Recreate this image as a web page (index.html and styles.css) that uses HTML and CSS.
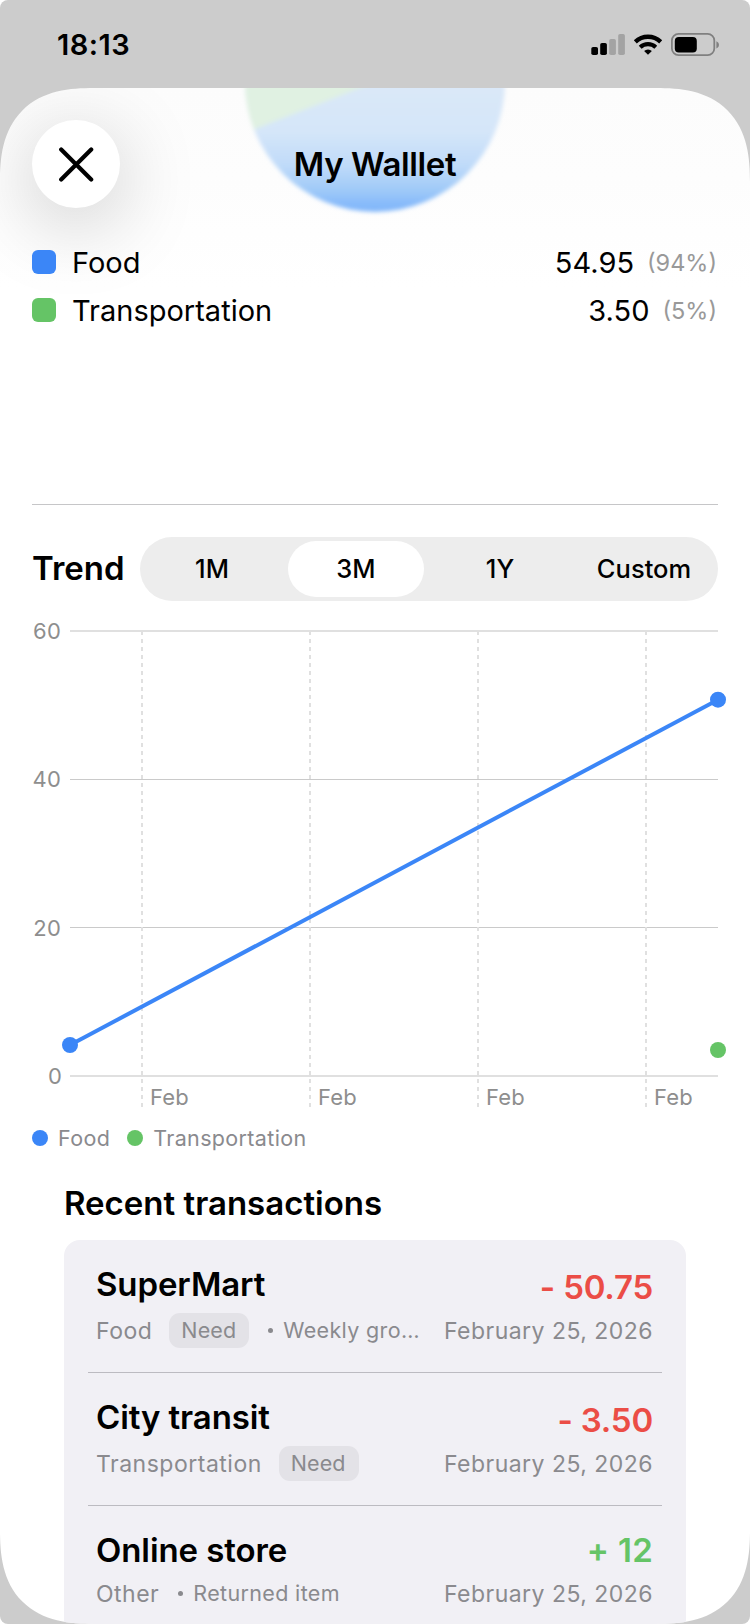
FILE: index.html
```
<!DOCTYPE html>
<html lang="en">
<head>
  <meta charset="UTF-8" />
  <meta name="viewport" content="width=device-width, initial-scale=1.0">
  <title>My Walllet</title>
  <link rel="stylesheet" href="styles.css">
</head>
<body>
  <div class="screen">
    <div class="status-bar">
      <span class="clock">18:13</span>
      <svg class="status-icons" width="130" height="26" viewBox="590 32 130 26">
        <rect x="591.3" y="47" width="6.7" height="8" rx="1.8"/>
        <rect x="600.2" y="43" width="6.7" height="12" rx="1.8"/>
        <rect x="609.2" y="39" width="6.7" height="16" rx="1.8" fill="#a3a3a3"/>
        <rect x="618.2" y="34" width="6.7" height="21" rx="1.8" fill="#a3a3a3"/>
        <!-- wifi -->
        <path d="M635.3 41.8a18.6 18.6 0 0 1 25.4 0" fill="none" stroke="#000" stroke-width="4.4"/>
        <path d="M640.2 47.2a11.6 11.6 0 0 1 15.6 0" fill="none" stroke="#000" stroke-width="4.2"/>
        <path d="M648 54.8l-3.9-3.7a5.8 5.8 0 0 1 7.8 0z"/>
        <!-- battery -->
        <rect x="671.9" y="33.9" width="42.4" height="21.2" rx="6.6" fill="none" stroke="#808080" stroke-width="1.8"/>
        <rect x="674.8" y="37" width="22" height="15.4" rx="4"/>
        <path d="M716.4 41.2c3.4 1.4 3.4 5.8 0 7.2z" fill="#808080"/>
      </svg>
    </div>

    <div class="sheet">
      <div class="sheet-header">
        <svg class="pie" width="290" height="150" viewBox="230 88 290 150">
          <defs>
            <linearGradient id="pieFade" gradientUnits="userSpaceOnUse" x1="0" y1="88" x2="0" y2="212">
              <stop offset="0" stop-color="#dae8f8"/>
              <stop offset="0.35" stop-color="#d5e6f9"/>
              <stop offset="0.62" stop-color="#c0dbf9"/>
              <stop offset="0.82" stop-color="#a0caf8"/>
              <stop offset="0.94" stop-color="#86bafa"/>
              <stop offset="1" stop-color="#84b8fa"/>
            </linearGradient>
            <filter id="pieBlur" x="-10%" y="-10%" width="120%" height="120%">
              <feGaussianBlur stdDeviation="2"/>
            </filter>
          </defs>
          <g filter="url(#pieBlur)">
            <circle cx="375" cy="82" r="130" fill="url(#pieFade)"/>
            <path d="M375 82L254 129.6A130 130 0 0 1 245 82z" fill="#e0f1e2"/>
          </g>
        </svg>
        <button class="close-button" aria-label="Close">
          <svg width="36" height="36" viewBox="0 0 36 36">
            <path d="M3.2 3.4L33.2 33.4M33.2 3.4L3.2 33.4" fill="none" stroke="#000" stroke-width="4.2" stroke-linecap="round"/>
          </svg>
        </button>
        <h1 class="sheet-title">My Walllet</h1>
      </div>

      <div class="categories">
        <div class="category">
          <span class="swatch food"></span>
          <span class="category-name">Food</span>
          <span class="category-value">54.95</span>
          <span class="category-percent">(94%)</span>
        </div>
        <div class="category">
          <span class="swatch transport"></span>
          <span class="category-name">Transportation</span>
          <span class="category-value">3.50</span>
          <span class="category-percent">(5%)</span>
        </div>
      </div>

      <div class="trend-row">
        <h2 class="trend-title">Trend</h2>
        <div class="segments">
          <button class="segment">1M</button>
          <button class="segment active">3M</button>
          <button class="segment">1Y</button>
          <button class="segment">Custom</button>
        </div>
      </div>

      <svg class="chart" width="750" height="522" viewBox="0 601 750 522">
        <path d="M70 631H718M70 1076H718" stroke="#e0e0e0" stroke-width="2"/>
        <path d="M70 779.5H718M70 927.5H718" stroke="#cacaca"/>
        <path d="M142 631V1107M310 631V1107M478 631V1107M646 631V1107" stroke="#e0e0e0" stroke-width="2" stroke-dasharray="4 4"/>
        <g class="axis-label" text-anchor="end">
          <text x="61" y="639">60</text>
          <text x="61" y="787">40</text>
          <text x="61" y="936">20</text>
          <text x="62" y="1084">0</text>
        </g>
        <g class="axis-label">
          <text x="150" y="1105">Feb</text>
          <text x="318" y="1105">Feb</text>
          <text x="486" y="1105">Feb</text>
          <text x="654" y="1105">Feb</text>
        </g>
        <path d="M70 1045L718 699.7" stroke="#3b86f7" stroke-width="4"/>
        <circle cx="70" cy="1045" r="8" fill="#3b86f7"/>
        <circle cx="718" cy="699.7" r="8" fill="#3b86f7"/>
        <circle cx="718" cy="1050" r="8" fill="#65c466"/>
      </svg>

      <div class="chart-legend">
        <span class="dot food"></span>
        <span class="legend-name">Food</span>
        <span class="dot transport"></span>
        <span class="legend-name">Transportation</span>
      </div>

      <h2 class="recent-title">Recent transactions</h2>
      <div class="transactions">
        <div class="transaction">
          <div class="details">
            <div class="name">SuperMart</div>
            <div class="meta">
              <span class="kind">Food</span>
              <span class="badge">Need</span>
              <span class="note"><span class="bullet"></span>Weekly gro…</span>
            </div>
          </div>
          <div class="totals">
            <div class="amount expense">- 50.75</div>
            <div class="date">February 25, 2026</div>
          </div>
        </div>
        <div class="transaction">
          <div class="details">
            <div class="name">City transit</div>
            <div class="meta">
              <span class="kind">Transportation</span>
              <span class="badge">Need</span>
            </div>
          </div>
          <div class="totals">
            <div class="amount expense">- 3.50</div>
            <div class="date">February 25, 2026</div>
          </div>
        </div>
        <div class="transaction">
          <div class="details">
            <div class="name">Online store</div>
            <div class="meta">
              <span class="kind">Other</span>
              <span class="note"><span class="bullet"></span>Returned item</span>
            </div>
          </div>
          <div class="totals">
            <div class="amount income">+ 12</div>
            <div class="date">February 25, 2026</div>
          </div>
        </div>
      </div>
    </div>
  </div>
</body>
</html>
```
FILE: styles.css
```
* {
  box-sizing: border-box;
}

body {
  margin: 0;
  background-color: #ffffff;
  color: #000000;
  font-family: Inter, "Liberation Sans", sans-serif;
}

h1, h2 {
  margin: 0;
  font-weight: 600;
}

button {
  border: none;
  padding: 0;
  font-family: inherit;
  color: inherit;
}

.screen {
  display: flex;
  flex-direction: column;
  width: 750px;
  height: 1624px;
  overflow: hidden;
  border-radius: 8px;
  background-color: #cccccc;
}

.status-bar {
  flex: none;
  display: flex;
  align-items: center;
  justify-content: space-between;
  height: 88px;
  padding: 0 30px 0 57px;
}

.clock {
  font-size: 29px;
  font-weight: 600;
  letter-spacing: 0.5px;
  margin-top: 1px;
}

.status-icons {
  margin-top: 2px;
}

.sheet {
  flex: none;
  display: flex;
  flex-direction: column;
  height: 1536px;
  overflow: hidden;
  border-radius: 78px;
  background: linear-gradient(#fcfcfc, #fdfdfd 90px, #ffffff 200px);
}

@supports (corner-shape: squircle) {
  .sheet {
    border-radius: 94px;
    corner-shape: superellipse(1.35);
  }
}

.sheet > * {
  flex: none;
}

.sheet-header {
  position: relative;
  display: flex;
  align-items: center;
  justify-content: center;
  height: 150px;
  padding-top: 2px;
}

.pie {
  position: absolute;
  top: 0;
  left: 230px;
}

.close-button {
  position: absolute;
  top: 32px;
  left: 32px;
  display: flex;
  align-items: center;
  justify-content: center;
  width: 88px;
  height: 88px;
  border-radius: 50%;
  background-color: #ffffff;
  box-shadow: 0 16px 80px rgba(0, 0, 0, 0.22);
}

.sheet-title {
  position: relative;
  font-size: 33px;
  line-height: 40px;
  letter-spacing: -0.4px;
}

.categories {
  position: relative;
  height: 267px;
  margin: 0 32px;
  border-bottom: 1px solid #c6c6c8;
}

.category {
  display: flex;
  align-items: center;
  height: 48px;
  padding-right: 1px;
  font-size: 29px;
}

.swatch {
  width: 24px;
  height: 24px;
  border-radius: 6px;
  margin-right: 16px;
}

.food {
  background-color: #3b86f7;
}

.transport {
  background-color: #65c466;
}

.category-value {
  margin-left: auto;
}

.category-percent {
  margin-left: 13px;
  font-size: 23.5px;
  color: #999999;
}

.trend-row {
  display: flex;
  align-items: center;
  justify-content: space-between;
  margin: 32px 32px 0;
}

.trend-title {
  margin-bottom: 2px;
  font-size: 33px;
  line-height: 40px;
}

.segments {
  display: grid;
  grid-template-columns: repeat(4, 144px);
  width: 578px;
  height: 64px;
  padding: 4px 0;
  border-radius: 32px;
  background-color: #ededed;
}

.segment {
  margin: 0 4px;
  padding-bottom: 1px;
  border-radius: 28px;
  background: none;
  font-size: 25.5px;
  font-weight: 500;
}

.segment.active {
  background-color: #ffffff;
}

.chart {
  display: block;
}

.axis-label {
  font-size: 22px;
  letter-spacing: 0.2px;
  fill: #8e8e8e;
}

.chart-legend {
  display: flex;
  align-items: center;
  height: 30px;
  margin-left: 32px;
  font-size: 21.5px;
  line-height: 28px;
  letter-spacing: 0.35px;
  color: #8a8a8e;
}

.dot {
  width: 16px;
  height: 16px;
  margin-right: 10px;
  border-radius: 50%;
}

.legend-name {
  margin-right: 17px;
  padding-bottom: 1px;
}

.recent-title {
  margin: 30px 0 0 64px;
  font-size: 33px;
  line-height: 40px;
}

.transactions {
  height: 384px;
  margin: 17px 64px 0;
  padding: 0 24px;
  border-radius: 16px 16px 0 0;
  background-color: #f1f0f5;
}

.transaction {
  display: flex;
  align-items: center;
  justify-content: space-between;
  padding: 24px 9px 24px 8px;
  border-bottom: 1px solid #bcbbc1;
}

.name,
.amount {
  margin-bottom: 9px;
  font-size: 33px;
  font-weight: 600;
  line-height: 40px;
}

.name {
  letter-spacing: -0.1px;
}

.meta {
  display: flex;
  align-items: center;
  font-size: 23px;
  line-height: 29px;
  letter-spacing: 0.5px;
  color: #8a8a8e;
}

.kind {
  padding-top: 1px;
  line-height: 28px;
}

.badge {
  height: 35px;
  margin-left: 17px;
  padding: 0 13px 0 12px;
  border-radius: 11px;
  background-color: #e3e2e7;
  font-size: 21.5px;
  line-height: 35px;
  letter-spacing: 0.1px;
}

.note {
  display: flex;
  align-items: center;
  margin-left: 19px;
  font-size: 21.5px;
  letter-spacing: 0.35px;
}

.bullet {
  width: 5px;
  height: 5px;
  margin-right: 10px;
  border-radius: 50%;
  background-color: #8a8a8e;
}

.totals {
  text-align: right;
}

.expense {
  color: #eb4d46;
  letter-spacing: -0.2px;
}

.income {
  color: #65c466;
  letter-spacing: 0.3px;
}

.date {
  padding-top: 1px;
  font-size: 23px;
  line-height: 28px;
  letter-spacing: 0.47px;
  color: #8a8a8e;
}
```
